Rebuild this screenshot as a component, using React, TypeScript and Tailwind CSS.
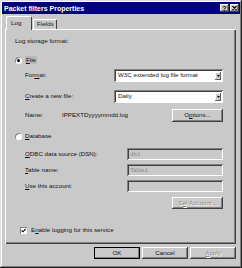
import React from 'react'

const raised = 'shadow-[inset_-1px_-1px_0_#404040,inset_1px_1px_0_#ffffff,inset_-2px_-2px_0_#808080]'
const sunken = 'shadow-[inset_1px_1px_0_#808080,inset_-1px_-1px_0_#ffffff,inset_2px_2px_0_#404040]'

function U({ children }: { children: React.ReactNode }) {
  return <span className="underline decoration-[0.5px] underline-offset-[1px]">{children}</span>
}

function Radio({ checked }: { checked?: boolean }) {
  return (
    <span className="flex h-[7px] w-[7px] items-center justify-center rounded-full bg-white shadow-[inset_1px_1px_0_#808080,inset_-1px_-1px_0_#ffffff]">
      {checked && <span className="h-[3px] w-[3px] rounded-full bg-black" />}
    </span>
  )
}

function Combo({ value }: { value: string }) {
  return (
    <div className={`flex h-[13px] flex-1 items-center bg-white pl-[4px] ${sunken}`}>
      <span className="flex-1">{value}</span>
      <span className="mr-[2px] flex h-[8px] w-[6px] items-center justify-center bg-[#c9c9c9] shadow-[inset_-1px_-1px_0_#606060,inset_1px_1px_0_#ffffff]">
        <svg width="3" height="2" viewBox="0 0 3 2">
          <path d="M0 0h3L1.5 2z" fill="#000" />
        </svg>
      </span>
    </div>
  )
}

function Field({ value }: { value: string }) {
  return (
    <div className={`flex h-[12px] flex-1 items-center bg-[#c9c9c9] pl-[3px] text-[#8a8a8a] ${sunken}`}>
      {value}
    </div>
  )
}

function Button({ children, disabled, isDefault }: { children: React.ReactNode; disabled?: boolean; isDefault?: boolean }) {
  return (
    <div
      className={`flex h-[12px] w-[46px] items-center justify-center bg-[#c9c9c9] ${raised} ${
        disabled ? 'text-[#8a8a8a] [text-shadow:1px_1px_0_#ffffff]' : ''
      } ${isDefault ? 'outline outline-1 -outline-offset-1 outline-black' : ''}`}
    >
      {children}
    </div>
  )
}

export default function App() {
  return (
    <div className="flex h-[268px] w-[242px] flex-col bg-[#c9c9c9] p-[2px] font-['Liberation_Sans',Arial,sans-serif] text-[6.2px] leading-none text-[#111] shadow-[inset_-1px_-1px_0_#202020,inset_1px_1px_0_#dfdfdf,inset_-2px_-2px_0_#808080,inset_2px_2px_0_#ffffff]">
      {/* Title bar */}
      <div className="flex h-[12px] items-center bg-[#000080] pl-[2px] pr-[1px]">
        <span className="flex-1 text-[7px] font-bold text-white">Packet filters Properties</span>
        <div className="flex gap-[1px]">
          <span className={`flex h-[8px] w-[9px] items-center justify-center bg-[#c9c9c9] text-[7px] font-bold ${raised}`}>?</span>
          <span className={`flex h-[8px] w-[9px] items-center justify-center bg-[#c9c9c9] ${raised}`}>
            <svg width="5" height="4" viewBox="0 0 5 4">
              <path d="M0.5 0L4.5 4M4.5 0L0.5 4" stroke="#000" strokeWidth="1.1" />
            </svg>
          </span>
        </div>
      </div>

      <div className="flex flex-1 flex-col pl-[3px] pr-[4px]">
        {/* Tabs */}
        <div className="mt-[2px] flex h-[13px] items-end gap-[1px] pl-[1px]">
          <div className="relative z-10 -mb-[1px] flex h-[14px] w-[26px] items-center rounded-t-[1px] bg-[#c9c9c9] pl-[5px] shadow-[inset_1px_1px_0_#ffffff,inset_-1px_0_0_#404040]">
            Log
          </div>
          <div className="flex h-[10px] w-[24px] items-center rounded-t-[1px] pl-[4px] pt-[1px] shadow-[inset_1px_1px_0_#ffffff,inset_-1px_0_0_#404040]">
            Fields
          </div>
        </div>

        {/* Tab page */}
        <div className="flex h-[215px] flex-col pl-[10px] pr-[13px] pt-[8px] shadow-[inset_1px_1px_0_#ffffff,inset_-1px_-1px_0_#404040,inset_-2px_-2px_0_#808080]">
          <div className="flex h-[8px] items-center">Log storage format:</div>

          <div className="mt-[11px] flex h-[8px] items-center gap-[3px]">
            <Radio checked />
            <span className="bg-[#b8b8b8] px-[1px] py-[1px]">
              <U>F</U>ile
            </span>
          </div>

          <div className="ml-[10px] mt-[5px] flex h-[13px] items-center">
            <span className="w-[89px]">
              For<U>m</U>at:
            </span>
            <Combo value="W3C extended log file format" />
          </div>

          <div className="ml-[10px] mt-[8px] flex h-[13px] items-center">
            <span className="w-[89px]">
              <U>C</U>reate a new file:
            </span>
            <Combo value="Daily" />
          </div>

          <div className="ml-[10px] mt-[6px] flex h-[13px] items-center">
            <span className="w-[37px]">Name:</span>
            <span className="flex-1">IPPEXTDyyyymmdd.log</span>
            <div className={`flex h-[13px] w-[51px] items-center justify-center bg-[#c9c9c9] ${raised}`}>
              O<U>p</U>tions...
            </div>
          </div>

          <div className="mt-[10px] flex h-[8px] items-center gap-[3px]">
            <Radio />
            <span>
              <U>D</U>atabase
            </span>
          </div>

          <div className="ml-[10px] mt-[8px] flex h-[12px] items-center">
            <span className="w-[102px]">
              <U>O</U>DBC data source (DSN):
            </span>
            <Field value="db1" />
          </div>

          <div className="ml-[10px] mt-[4px] flex h-[12px] items-center">
            <span className="w-[102px]">
              <U>T</U>able name:
            </span>
            <Field value="Table1" />
          </div>

          <div className="ml-[10px] mt-[4px] flex h-[12px] items-center">
            <span className="w-[102px]">
              <U>U</U>se this account:
            </span>
            <Field value="" />
          </div>

          <div className="mt-[5px] flex h-[12px] justify-end">
            <div className={`flex h-[12px] w-[51px] items-center justify-center bg-[#c9c9c9] text-[#8a8a8a] [text-shadow:1px_1px_0_#ffffff] ${raised}`}>
              S<U>e</U>t Account...
            </div>
          </div>

          <div className="ml-[5px] mt-[17px] flex h-[8px] items-center gap-[4px]">
            <span className="flex h-[7px] w-[7px] items-center justify-center bg-white shadow-[inset_1px_1px_0_#808080,inset_-1px_-1px_0_#ffffff]">
              <svg width="5" height="5" viewBox="0 0 5 5">
                <path d="M0.5 2.3L2 3.8L4.6 0.8" stroke="#000" strokeWidth="1.1" fill="none" />
              </svg>
            </span>
            <span>
              E<U>n</U>able logging for this service
            </span>
          </div>
        </div>

        {/* Dialog buttons */}
        <div className="mt-[3px] flex justify-end gap-[2px]">
          <Button isDefault>OK</Button>
          <Button>Cancel</Button>
          <Button disabled>
            <U>A</U>pply
          </Button>
        </div>
      </div>
    </div>
  )
}
